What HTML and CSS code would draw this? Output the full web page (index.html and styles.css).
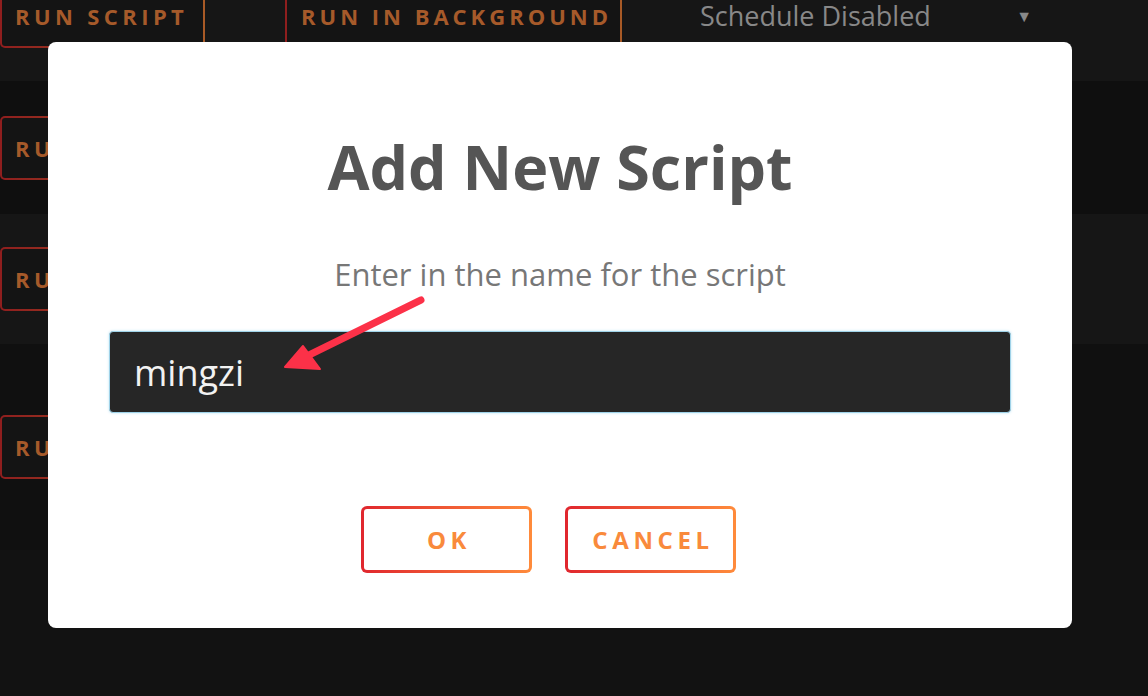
FILE: index.html
```html
<!DOCTYPE html>
<html>
  <head>
    <meta charset="utf-8">
    <meta name="viewport" content="width=device-width, initial-scale=1.0">
    <title>Scripts</title>
    <link rel="stylesheet" href="styles.css">
  </head>
  <body>
    <div class="script-list">
      <div class="script-row row-light">
        <button class="run-button">RUN SCRIPT</button>
        <button class="run-button run-bg">RUN IN BACKGROUND</button>
        <div class="schedule-select">
          <span class="select-label">Schedule Disabled</span>
          <span class="select-arrow">&#9660;</span>
        </div>
      </div>
      <div class="script-row row-dark">
        <button class="run-button">RUN SCRIPT</button>
      </div>
      <div class="script-row row-light">
        <button class="run-button">RUN SCRIPT</button>
      </div>
      <div class="script-row row-dark row-tall">
        <button class="run-button">RUN SCRIPT</button>
      </div>
      <div class="script-row row-end"></div>
    </div>

    <div class="modal">
      <h1 class="modal-title">Add New Script</h1>
      <p class="modal-text">Enter in the name for the script</p>
      <input class="modal-input" type="text" value="mingzi">
      <div class="modal-actions">
        <button class="modal-button">OK</button>
        <button class="modal-button">CANCEL</button>
      </div>
    </div>

    <!-- annotation arrow -->
    <svg class="pointer-arrow" width="1148" height="696" viewBox="0 0 1148 696">
      <line x1="421" y1="300" x2="305" y2="357" stroke="#fc3148" stroke-width="7" stroke-linecap="round"></line>
      <polygon points="285,367 303,346 320,369" fill="#fc3148" stroke="#fc3148" stroke-width="2" stroke-linejoin="round"></polygon>
    </svg>
  </body>
</html>
```

FILE: styles.css
```css
html, body {
  width: 100%;
  height: 100%;
  margin: 0;
  padding: 0;
  background-color: #111;
  font-family: "Open Sans", "Noto Sans", sans-serif;
  overflow: hidden;
}
.script-list {
  margin-top: -49px;
}
.script-row {
  display: flex;
  align-items: center;
  height: 130px;
}
.row-light {
  background-color: #161616;
}
.row-dark {
  background-color: #0f0f0f;
  height: 133px;
}
.row-tall {
  background-color: #101010;
  height: 206px;
}
.row-end {
  background-color: #121212;
  height: 160px;
}
.run-button {
  flex-shrink: 0;
  height: 64px;
  width: 205px;
  padding: 0 0 0 13px;
  text-align: left;
  border: 2px solid transparent;
  border-radius: 5px;
  background: linear-gradient(#141414, #141414) padding-box,
    linear-gradient(90deg, #8f1e1e, #a85a26) border-box;
  color: #a65a2a;
  font-family: "Open Sans", sans-serif;
  font-weight: 700;
  font-size: 22px;
  letter-spacing: 4.4px;
  white-space: nowrap;
}
.run-bg {
  margin-left: 80px;
  width: 337px;
  padding-left: 14px;
  letter-spacing: 4px;
}
.schedule-select {
  flex-shrink: 0;
  display: flex;
  align-items: center;
  margin-left: 78px;
  width: 332px;
  color: #888;
  font-size: 27px;
  line-height: 36px;
}
.select-label {
  white-space: nowrap;
}
.select-arrow {
  margin-left: auto;
  font-size: 16px;
  color: #888;
}
.modal {
  position: fixed;
  left: 48px;
  top: 42px;
  width: 1024px;
  height: 586px;
  box-sizing: border-box;
  background: #fff;
  border-radius: 8px;
  display: flex;
  flex-direction: column;
  align-items: center;
  padding-top: 83px;
}
.modal-title {
  margin: 0;
  color: #555;
  font-size: 61px;
  font-weight: 700;
  line-height: 84px;
}
.modal-text {
  margin: 44px 0 0;
  color: #777;
  font-size: 31px;
  line-height: 42px;
}
.modal-input {
  margin-top: 36px;
  width: 902px;
  height: 82px;
  box-sizing: border-box;
  padding: 0 24px;
  background: #262626;
  border: 1px solid #9fd2e8;
  border-radius: 4px;
  box-shadow: 0 0 3px #bfe4f3;
  color: #f2f2f2;
  font-family: "Open Sans", sans-serif;
  font-size: 36px;
  outline: none;
}
.modal-actions {
  display: flex;
  gap: 33px;
  margin-top: 93px;
  margin-right: 23px;
}
.modal-button {
  width: 171px;
  height: 67px;
  border: 3px solid transparent;
  border-radius: 6px;
  background: linear-gradient(#fff, #fff) padding-box,
    linear-gradient(90deg, #e0262e, #ff8b3b) border-box;
  color: #f98a3c;
  font-family: "Open Sans", sans-serif;
  font-weight: 700;
  font-size: 24px;
  letter-spacing: 4.6px;
  padding: 0 0 0 5px;
}
.pointer-arrow {
  position: fixed;
  left: 0;
  top: 0;
  pointer-events: none;
}
```
